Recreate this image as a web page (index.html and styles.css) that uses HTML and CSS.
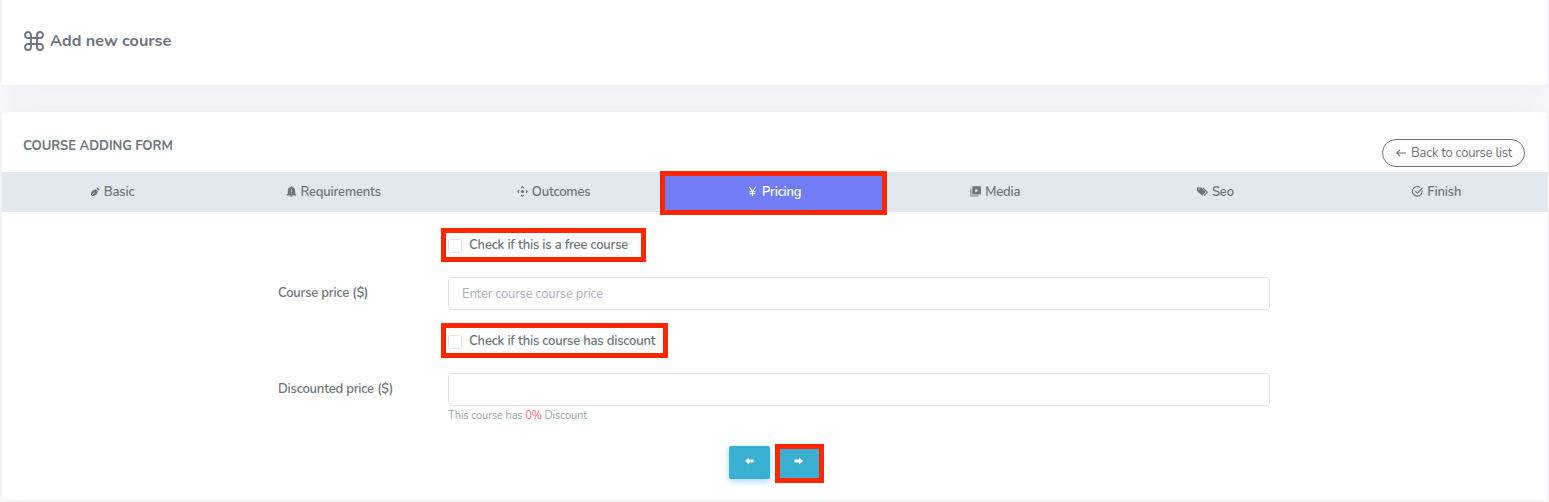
FILE: index.html
```html
<!DOCTYPE html>
<html lang="en">
<head>
<meta charset="utf-8">
<title>Add new course</title>
<link rel="stylesheet" href="styles.css">
</head>
<body>
<header class="card page-head">
  <svg class="command" viewBox="0 0 20 20"><path d="M7 7V4a3 3 0 1 0-3 3h12a3 3 0 1 0-3-3v12a3 3 0 1 0 3-3H4a3 3 0 1 0 3 3z"/></svg>
  <h1 class="title">Add new course</h1>
</header>
<main class="card form-card">
  <div class="form-head">
    <h2 class="subtitle">COURSE ADDING FORM</h2>
    <a class="back"><svg class="back-icon" viewBox="0 0 10 10"><path d="M10 5H1M4 1.800.8 5 4 8.200"/></svg><span class="back-label">Back to course list</span></a>
  </div>
  <nav class="tabs">
    <a class="tab"><svg class="icon pen" viewBox="0 0 12 12"><path d="M1 11c0-3.500.8-5.500 2.500-7L7 2.600 9.500 5 8.300 8.500C6.800 10.200 4.500 11 1 11zM7.700 2l1.600-1.500 2.300 2.300L10.100 4.400z"/><path class="cut" d="M1 11l4.500-4.500"/></svg><span class="basic">Basic</span></a>
    <a class="tab"><svg class="icon" viewBox="0 0 12 12"><path d="M6 .3c.6 0 .9.4.9.9C8.900 1.600 10 3.100 10 4.800v3.500L11.300 9.500v.8H.7v-.8L2 8.300V4.800c0-1.700 1.100-3.200 3.100-3.600 0-.5.3-.9.9-.9zM4.700 10.700h2.600c0 1.500-2.600 1.500-2.600 0z"/><path class="cut" d="M6 3.500v2.700M6 7.400v1"/></svg><span class="requirements">Requirements</span></a>
    <a class="tab"><svg class="icon" viewBox="0 0 12 12"><circle cx="6" cy="6" r="1.700"/><path class="line" d="M4.500 2.200 6 .8l1.500 1.400M4.500 9.800 6 11.200l1.500-1.400M2.200 4.500.8 6l1.400 1.500M9.800 4.500 11.200 6 9.800 7.500"/></svg><span class="outcomes">Outcomes</span></a>
    <a class="tab active"><svg class="icon" viewBox="0 0 12 12"><path class="line" d="M2.500 1 6 6l3.500-5M6 6v5.300M2.800 6.200h6.400M2.800 8.300h6.400"/></svg><span class="pricing">Pricing</span></a>
    <a class="tab"><svg class="icon" viewBox="0 0 12 12"><path class="pale" d="M0 2.700v9h9.500v-1.500H1.700V2.700z"/><path d="M3.300.3h7.800c.5 0 .8.300.8.800v7.300c0 .5-.3.800-.8.800H3.300c-.5 0-.8-.3-.8-.8V1.100c0-.5.3-.8.800-.8z"/><path class="hole" d="M5.800 2.600v4.400L9.200 4.800z"/></svg><span class="media">Media</span></a>
    <a class="tab"><svg class="icon" viewBox="0 0 12 12"><path d="M0 1.500h4.800l4.800 4.900-3.900 4.200L0 5.500z"/><path class="line" d="M6.300 2l5 4.600-3.500 3.900"/><circle class="hole" cx="2" cy="3.400" r=".8"/></svg><span class="seo">Seo</span></a>
    <a class="tab"><svg class="icon" viewBox="0 0 12 12"><path class="line" d="M11 4.800A5.300 5.300 0 1 1 8.700 1.300M3.500 5.500 6 7.900l5.500-5.900"/></svg><span class="finish">Finish</span></a>
    <i class="mark mark-tab"></i>
  </nav>
  <form class="fields">
    <label class="check"><span class="box"></span><span class="free">Check if this is a free course</span><i class="mark mark-free"></i></label>
    <div class="row"><label class="name price">Course price ($)</label><div class="input"><span class="hint">Enter course course price</span></div></div>
    <label class="check second"><span class="box"></span><span class="has">Check if this course has discount</span><i class="mark mark-has"></i></label>
    <div class="row"><label class="name discounted">Discounted price ($)</label><div class="input"></div></div>
    <small class="note">This course has <span class="percent">0%</span> Discount</small>
  </form>
  <div class="pager">
    <a class="step"><svg class="arrow" viewBox="0 0 10 8"><path d="M0 4 4.500 0v2.400H9.500v3.200H4.500V8z"/></svg></a>
    <a class="step next"><svg class="arrow" viewBox="0 0 10 8"><path d="M10 4 5.500 0v2.400H.5v3.200h5V8z"/></svg><i class="mark mark-step"></i></a>
  </div>
</main>
</body>
</html>
```
FILE: styles.css
```css
* { box-sizing: border-box; }
body { margin: 0; padding: 0 2px; height: 502px; overflow: hidden; background: #f8f9fd; color: #6c757d; font: 600 13px/20px Nunito, Lato, "Open Sans", sans-serif; letter-spacing: -.18px; white-space: nowrap; }
h1, h2 { margin: 0; font-weight: 700; }
.card { background: #fff; border-radius: 3px; box-shadow: 0 0 35px rgba(154, 161, 171, .15); }
.page-head { height: 85px; margin-bottom: 27px; padding: 30px 0 0 22px; display: flex; gap: 6px; border-radius: 0 0 3px 3px; }
.command { width: 20px; height: 20px; margin-top: 1px; fill: none; stroke: #6c757d; stroke-width: 1.8; }
.title { font-size: 16.2px; line-height: 22px; font-weight: 750; letter-spacing: 0; }
.form-card { height: 388px; position: relative; }
.form-head { height: 60px; padding: 0 22px 0 21px; display: flex; justify-content: space-between; }
.subtitle { font-size: 13px; line-height: 20px; padding-top: 24px; letter-spacing: -.03px; font-weight: 720; }
.back { margin-top: 27px; width: 143px; height: 28px; border: 1px solid #6c757d; border-radius: 14px; display: flex; align-items: center; padding: 0 0 1px 13px; gap: 5px; font-weight: 450; }
.back-label { letter-spacing: -.25px; }
.back-icon { width: 10px; height: 10px; fill: none; stroke: #6c757d; stroke-width: 1.2; }
.tabs { height: 40px; display: grid; grid-template-columns: repeat(7, 1fr); background: #e2e8ef; position: relative; }
.tab { display: flex; align-items: center; justify-content: center; gap: 4px; padding-bottom: 1px; }
.active { background: #727cf5; color: #fff; }
.icon { width: 11px; height: 11px; fill: currentColor; }
.pen { width: 10px; height: 10px; }
.line { fill: none; stroke: currentColor; stroke-width: 1.2; }
.cut { fill: none; stroke: #e2e8ef; stroke-width: .8; }
.hole { fill: #e2e8ef; }
.pale { opacity: .6; }
.basic { width: 31px; }
.requirements { width: 80px; }
.outcomes { width: 59px; }
.pricing { width: 40px; font-weight: 650; }
.media { width: 35px; }
.seo { width: 23px; }
.finish { width: 34px; }
.mark { position: absolute; border: 5px solid #ff2600; }
.mark-tab { left: 658px; top: -1px; width: 227px; height: 44px; }
.fields { padding: 23px 277px 0 276px; height: 212px; }
.check { display: flex; position: relative; margin-left: 170px; gap: 7px; height: 20px; }
.box { width: 14px; height: 14px; margin-top: 4px; border: 1px solid #dee2e6; border-radius: 3px; }
.mark-free { left: -7px; top: -7px; width: 205px; height: 34px; }
.mark-has { left: -7px; top: -8px; width: 227px; height: 35px; }
.row { display: flex; margin-top: 22px; height: 33px; }
.name { width: 170px; padding-top: 6px; }
.input { flex: 1; border: 1px solid #dee2e6; border-radius: 4px; padding: 6px 13px; }
.hint { color: #a9b2bb; font-weight: 400; }
.second { margin-top: 21px; }
.note { display: block; margin: 0 0 0 170px; font-size: 11px; font-weight: 450; letter-spacing: -.12px; color: #98a6ad; }
.percent { color: #fa5c7c; }
.pager { display: flex; gap: 9px; padding: 22px 0 0 727px; }
.step { width: 41px; height: 33px; border-radius: 2px; background: #39afd1; box-shadow: 0 2px 6px rgba(57, 175, 209, .5); display: flex; justify-content: center; padding-top: 11px; position: relative; }
.next { padding-right: 2px; box-shadow: none; }
.arrow { width: 9px; height: 8px; fill: #fff; }
.mark-step { left: -4px; top: -2px; width: 49px; height: 39px; }
```
